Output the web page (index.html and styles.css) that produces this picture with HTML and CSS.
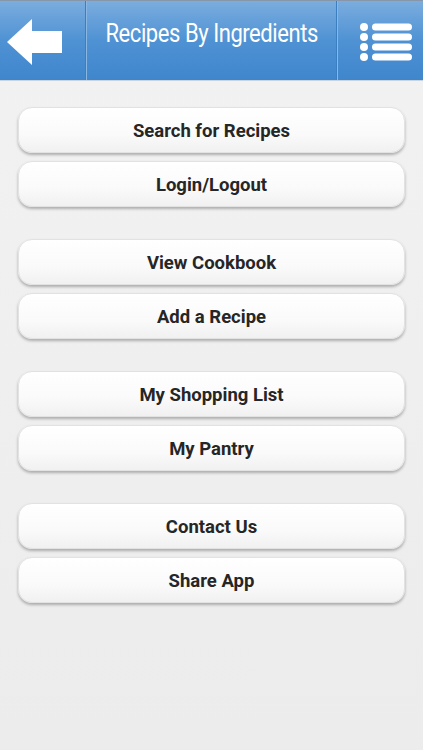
FILE: index.html
```html
<!DOCTYPE html>
<html lang="en">
<head>
	<meta charset="UTF-8">
	<title>Recipes By Ingredients</title>
	<link rel="stylesheet" href="styles.css">
</head>
<body>
	<div class="header">
		<div class="back">
			<svg width="56" height="46" viewBox="0 0 56 46">
				<polygon points="0,23 25,0 25,12 55,12 55,34 25,34 25,46" fill="#fff"/>
			</svg>
		</div>
		<div class="title"><span>Recipes By Ingredients</span></div>
		<div class="menu">
			<svg width="54" height="40" viewBox="0 0 54 40">
				<circle cx="5" cy="5" r="4" fill="#fff"/>
				<circle cx="5" cy="15" r="4" fill="#fff"/>
				<circle cx="5" cy="25" r="4" fill="#fff"/>
				<circle cx="5" cy="35" r="4" fill="#fff"/>
				<rect x="13" y="1.5" width="40" height="7" rx="3.5" fill="#fff"/>
				<rect x="13" y="11.5" width="40" height="7" rx="3.5" fill="#fff"/>
				<rect x="13" y="21.5" width="40" height="7" rx="3.5" fill="#fff"/>
				<rect x="13" y="31.5" width="40" height="7" rx="3.5" fill="#fff"/>
			</svg>
		</div>
	</div>

	<div class="content">
		<div class="group">
			<button class="btn">Search for Recipes</button>
			<button class="btn">Login/Logout</button>
		</div>
		<div class="group">
			<button class="btn">View Cookbook</button>
			<button class="btn">Add a Recipe</button>
		</div>
		<div class="group">
			<button class="btn">My Shopping List</button>
			<button class="btn">My Pantry</button>
		</div>
		<div class="group">
			<button class="btn">Contact Us</button>
			<button class="btn">Share App</button>
		</div>
	</div>
</body>
</html>
```
FILE: styles.css
```css
* {
	padding: 0;
	margin: 0;
	box-sizing: border-box;
}
html, body {
	height: 100%;
}
body {
	font-family: Roboto, "Liberation Sans", sans-serif;
	background: linear-gradient(#f2f2f2, #ececec);
}
.header {
	height: 81px;
	display: flex;
	background: linear-gradient(#7badde, #4f92d4 50%, #3f86cc);
	border-top: 1px solid #8796aa;
	border-bottom: 1px solid #c9d4de;
}
.back {
	width: 86px;
	display: flex;
	align-items: center;
	padding-left: 7px;
	padding-top: 3px;
	border-right: 1px solid #3c7fc0;
}
.title {
	flex: 1;
	color: #fff;
	font-size: 25px;
	text-align: center;
	padding-top: 18px;
	border-left: 1px solid #8bb8e3;
	border-right: 1px solid #3c7fc0;
	white-space: nowrap;
}
.title span {
	display: inline-block;
	letter-spacing: -0.5px;
	transform: scaleX(0.88);
}
.menu {
	width: 86px;
	display: flex;
	align-items: center;
	justify-content: center;
	padding-left: 10px;
	padding-top: 2px;
	border-left: 1px solid #8bb8e3;
}
.content {
	padding: 26px 18px 0;
	display: flex;
	flex-direction: column;
	gap: 32px;
}
.group {
	display: flex;
	flex-direction: column;
	gap: 8px;
}
.btn {
	height: 46px;
	width: 100%;
	border: 1px solid #e2e2e2;
	border-radius: 14px;
	background: linear-gradient(#ffffff, #fafafa 60%, #f1f1f1);
	box-shadow: 0 2px 3px rgba(0, 0, 0, 0.28);
	font-family: Roboto, "Liberation Sans", sans-serif;
	font-size: 18.5px;
	font-weight: bold;
	color: #262626;
	padding-top: 2px;
}
```
